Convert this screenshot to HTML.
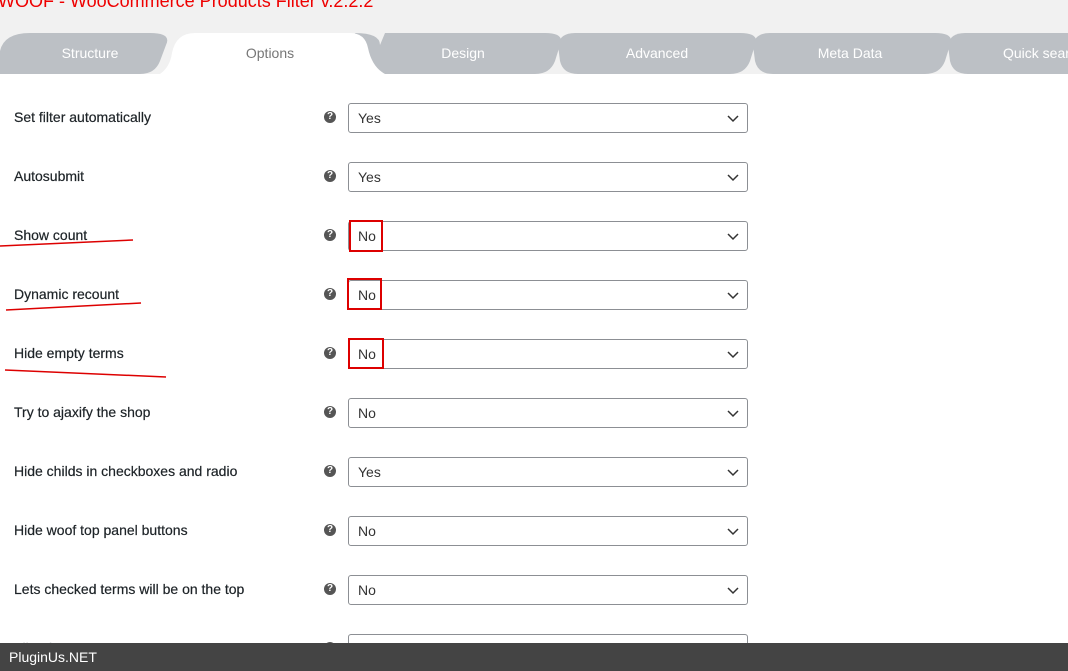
<!DOCTYPE html><html><head><style>
body{margin:0;width:1068px;height:671px;overflow:hidden;background:#fff;font-family:"Liberation Sans",sans-serif;position:relative}
.top{position:absolute;left:0;top:0;width:1068px;height:74px;background:#f1f1f1}
.title{position:absolute;left:-2px;top:-9px;color:#e00;font-size:18px}
svg.tabs{position:absolute;left:0;top:33px}
.tl{position:absolute;top:45px;font-size:14px;color:#fff;text-align:center;white-space:nowrap}
.row{position:absolute;left:0;width:760px;height:30px}
.lab{position:absolute;left:14px;top:6px;font-size:14px;color:#1d2327;-webkit-text-stroke:0.2px #1d2327}
.q{position:absolute;left:324px;top:8px;width:12px;height:12px;border-radius:50%;background:#555;color:#fff;font-size:10px;font-weight:bold;text-align:center;line-height:12px}
.sel{position:absolute;left:348px;top:0;width:398px;height:28px;border:1px solid #8c8f94;border-radius:3px;font-size:14px;color:#333}
.sel span{position:absolute;left:9px;top:6px}
.sel svg{position:absolute;right:8px;top:11px}
.box{position:absolute;border:2px solid #d00}
.foot{position:absolute;left:0;top:643px;width:1068px;height:28px;background:#444;color:#fff;font-size:14px}
.foot span{position:absolute;left:9px;top:6px}
</style></head><body>
<div class="top"><div class="title">WOOF - WooCommerce Products Filter v.2.2.2</div></div>
<svg class="tabs" width="1068" height="41">
<path d="M0 41 L0 18 Q4 0 30 0 L150 0 Q172 0 166 12 L160 28 Q155 41 140 41Z" fill="#bcc0c5"/>
<path d="M355 0 Q380 0 380 12 L385 0 L545 0 Q565 0 560 12 L555 28 Q550 41 535 41 L385 41 Q372 41 368 28Z" fill="#bcc0c5"/>
<path d="M575 0 L740 0 Q760 0 755 12 L750 28 Q745 41 730 41 L578 41 Q563 41 560 28 L558 12 Q560 0 575 0Z" fill="#bcc0c5"/>
<path d="M770 0 L935 0 Q955 0 950 12 L945 28 Q940 41 925 41 L773 41 Q758 41 755 28 L753 12 Q755 0 770 0Z" fill="#bcc0c5"/>
<path d="M965 0 L1068 0 L1068 41 L968 41 Q953 41 950 28 L948 12 Q950 0 965 0Z" fill="#bcc0c5"/>
<path d="M160 41 Q170 34 172 20 Q176 0 195 0 L350 0 Q365 0 368 15 Q372 34 385 41Z" fill="#fff"/>
</svg>
<div class="tl" style="left:20px;width:140px">Structure</div>
<div class="tl" style="left:200px;width:140px;color:#777">Options</div>
<div class="tl" style="left:393px;width:140px">Design</div>
<div class="tl" style="left:587px;width:140px">Advanced</div>
<div class="tl" style="left:780px;width:140px">Meta Data</div>
<div class="tl" style="left:1003px;text-align:left">Quick search</div>

<div class="row" style="top:103px"><div class="lab">Set filter automatically</div><div class="q">?</div><div class="sel"><span>Yes</span><svg width="12" height="8"><path d="M1 1L6 6L11 1" stroke="#333" stroke-width="1.5" fill="none"/></svg></div></div>
<div class="row" style="top:162px"><div class="lab">Autosubmit</div><div class="q">?</div><div class="sel"><span>Yes</span><svg width="12" height="8"><path d="M1 1L6 6L11 1" stroke="#333" stroke-width="1.5" fill="none"/></svg></div></div>
<div class="row" style="top:221px"><div class="lab">Show count</div><div class="q">?</div><div class="sel"><span>No</span><svg width="12" height="8"><path d="M1 1L6 6L11 1" stroke="#333" stroke-width="1.5" fill="none"/></svg></div></div>
<div class="row" style="top:280px"><div class="lab">Dynamic recount</div><div class="q">?</div><div class="sel"><span>No</span><svg width="12" height="8"><path d="M1 1L6 6L11 1" stroke="#333" stroke-width="1.5" fill="none"/></svg></div></div>
<div class="row" style="top:339px"><div class="lab">Hide empty terms</div><div class="q">?</div><div class="sel"><span>No</span><svg width="12" height="8"><path d="M1 1L6 6L11 1" stroke="#333" stroke-width="1.5" fill="none"/></svg></div></div>
<div class="row" style="top:398px"><div class="lab">Try to ajaxify the shop</div><div class="q">?</div><div class="sel"><span>No</span><svg width="12" height="8"><path d="M1 1L6 6L11 1" stroke="#333" stroke-width="1.5" fill="none"/></svg></div></div>
<div class="row" style="top:457px"><div class="lab">Hide childs in checkboxes and radio</div><div class="q">?</div><div class="sel"><span>Yes</span><svg width="12" height="8"><path d="M1 1L6 6L11 1" stroke="#333" stroke-width="1.5" fill="none"/></svg></div></div>
<div class="row" style="top:516px"><div class="lab">Hide woof top panel buttons</div><div class="q">?</div><div class="sel"><span>No</span><svg width="12" height="8"><path d="M1 1L6 6L11 1" stroke="#333" stroke-width="1.5" fill="none"/></svg></div></div>
<div class="row" style="top:575px"><div class="lab">Lets checked terms will be on the top</div><div class="q">?</div><div class="sel"><span>No</span><svg width="12" height="8"><path d="M1 1L6 6L11 1" stroke="#333" stroke-width="1.5" fill="none"/></svg></div></div>
<div class="row" style="top:634px"><div class="lab">Filter buttons</div><div class="q">?</div><div class="sel"></div></div>

<div class="box" style="left:349px;top:220px;width:30px;height:28px"></div>
<div class="box" style="left:347px;top:278px;width:31px;height:28px"></div>
<div class="box" style="left:348px;top:338px;width:32px;height:27px"></div>
<svg style="position:absolute;left:0;top:230px" width="180" height="150">
<path d="M0 16 L133 10" stroke="#d00" stroke-width="1.5" fill="none"/>
<path d="M6 80 L141 73" stroke="#d00" stroke-width="1.5" fill="none"/>
<path d="M5 140 L166 147" stroke="#d00" stroke-width="1.5" fill="none"/>
</svg>
<div class="foot"><span>PluginUs.NET</span></div>
</body></html>
